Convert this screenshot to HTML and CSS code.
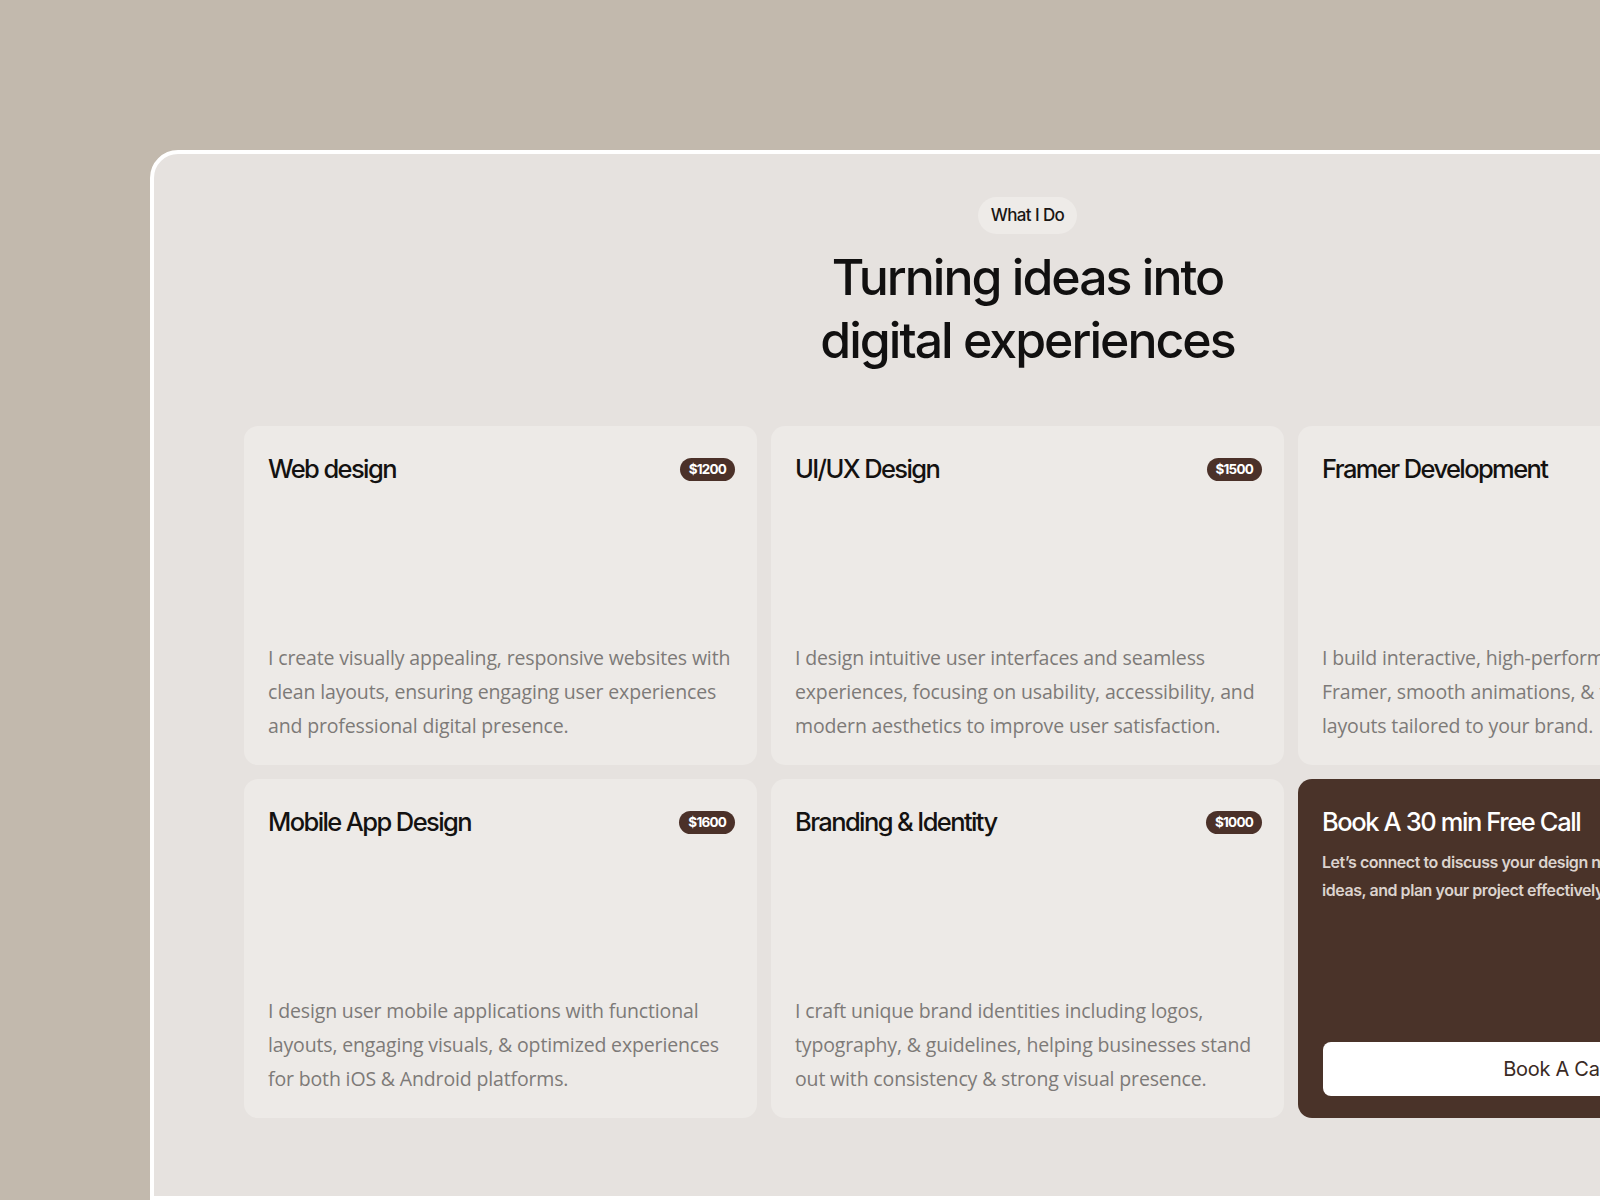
FILE: index.html
```html
<!DOCTYPE html>
<html lang="en">
<head>
<meta charset="utf-8">
<title>What I Do</title>
<link rel="stylesheet" href="styles.css">
</head>
<body>
<main class="panel">
  <header class="intro">
    <span class="pill">What I Do</span>
    <h1 class="headline">Turning ideas into<br>digital experiences</h1>
  </header>
  <section class="grid">
    <article class="card">
      <div class="card-head"><h2 class="card-title">Web design</h2><span class="price">$1200</span></div>
      <p class="card-text">I create visually appealing, responsive websites with<br>clean layouts, ensuring engaging user experiences<br>and professional digital presence.</p>
    </article>
    <article class="card">
      <div class="card-head"><h2 class="card-title">UI/UX Design</h2><span class="price">$1500</span></div>
      <p class="card-text">I design intuitive user interfaces and seamless<br>experiences, focusing on usability, accessibility, and<br>modern aesthetics to improve user satisfaction.</p>
    </article>
    <article class="card">
      <div class="card-head"><h2 class="card-title">Framer Development</h2><span class="price">$1400</span></div>
      <p class="card-text">I build interactive, high-performance websites in<br>Framer, smooth animations, &amp; fully responsive<br>layouts tailored to your brand.</p>
    </article>
    <article class="card">
      <div class="card-head"><h2 class="card-title">Mobile App Design</h2><span class="price">$1600</span></div>
      <p class="card-text">I design user mobile applications with functional<br>layouts, engaging visuals, &amp; optimized experiences<br>for both iOS &amp; Android platforms.</p>
    </article>
    <article class="card">
      <div class="card-head"><h2 class="card-title">Branding &amp; Identity</h2><span class="price">$1000</span></div>
      <p class="card-text">I craft unique brand identities including logos,<br>typography, &amp; guidelines, helping businesses stand<br>out with consistency &amp; strong visual presence.</p>
    </article>
    <article class="card card-dark">
      <div class="cta-top">
        <h2 class="card-title cta-title">Book A 30 min Free Call</h2>
        <p class="cta-text">Let’s connect to discuss your design needs, share<br>ideas, and plan your project effectively together.</p>
      </div>
      <a class="cta-btn" href="#">Book A Call</a>
    </article>
  </section>
</main>
</body>
</html>
```

FILE: styles.css
```css
html, body {
  margin: 0;
  padding: 0;
}
body {
  background: #c2b9ad;
  width: 1600px;
  height: 1200px;
  overflow: hidden;
  font-family: Inter, "Liberation Sans", sans-serif;
}
.panel {
  margin: 150px 0 0 150px;
  width: 1755px;
  height: 1050px;
  box-sizing: border-box;
  background: #e6e2df;
  border: 4px solid #ffffff;
  border-radius: 28px 0 0 0;
  padding: 43px 90px 0 90px;
}
.intro {
  display: flex;
  flex-direction: column;
  align-items: center;
}
.pill {
  display: inline-block;
  background: #eeebe8;
  border-radius: 20px;
  padding: 0 13px;
  height: 37px;
  line-height: 37px;
  font-size: 17px;
  font-weight: 500;
  letter-spacing: -0.6px;
  color: #1a1614;
}
.headline {
  margin: 12px 0 0;
  text-align: center;
  font-size: 50px;
  line-height: 63px;
  font-weight: 500;
  letter-spacing: -2px;
  color: #111010;
}
.grid {
  margin-top: 54px;
  display: grid;
  grid-template-columns: repeat(3, 513px);
  grid-auto-rows: 339px;
  gap: 14px 14px;
}
.card {
  background: #edeae7;
  border-radius: 14px;
  padding: 26px 22px 22px 24px;
  box-sizing: border-box;
  display: flex;
  flex-direction: column;
  justify-content: space-between;
}
.card-head {
  display: flex;
  justify-content: space-between;
  align-items: center;
}
.card-title {
  margin: 0;
  font-size: 25.5px;
  font-weight: 500;
  letter-spacing: -1.6px;
  color: #141211;
  line-height: 34px;
}
.price {
  background: #4b3129;
  color: #fff;
  font-size: 13.5px;
  font-weight: 700;
  letter-spacing: -0.8px;
  padding: 0 9px;
  height: 23px;
  line-height: 23px;
  border-radius: 12px;
}
.card-text {
  margin: 0;
  font-family: "Open Sans", "Liberation Sans", sans-serif;
  font-size: 19.5px;
  line-height: 34px;
  letter-spacing: -0.15px;
  color: #7d7a78;
  white-space: nowrap;
}
.card-dark {
  background: #4a3329;
}
.cta-title {
  color: #ffffff;
  letter-spacing: -1.4px;
}
.cta-text {
  margin: 10px 0 0;
  font-size: 16px;
  line-height: 27.5px;
  font-weight: 600;
  letter-spacing: -0.45px;
  color: #dcd3ce;
  white-space: nowrap;
}
.cta-btn {
  display: block;
  margin-left: 1px;
  height: 54px;
  line-height: 54px;
  background: #ffffff;
  border-radius: 8px;
  text-align: center;
  text-decoration: none;
  font-size: 20px;
  letter-spacing: -0.3px;
  color: #3a2a24;
}
```
